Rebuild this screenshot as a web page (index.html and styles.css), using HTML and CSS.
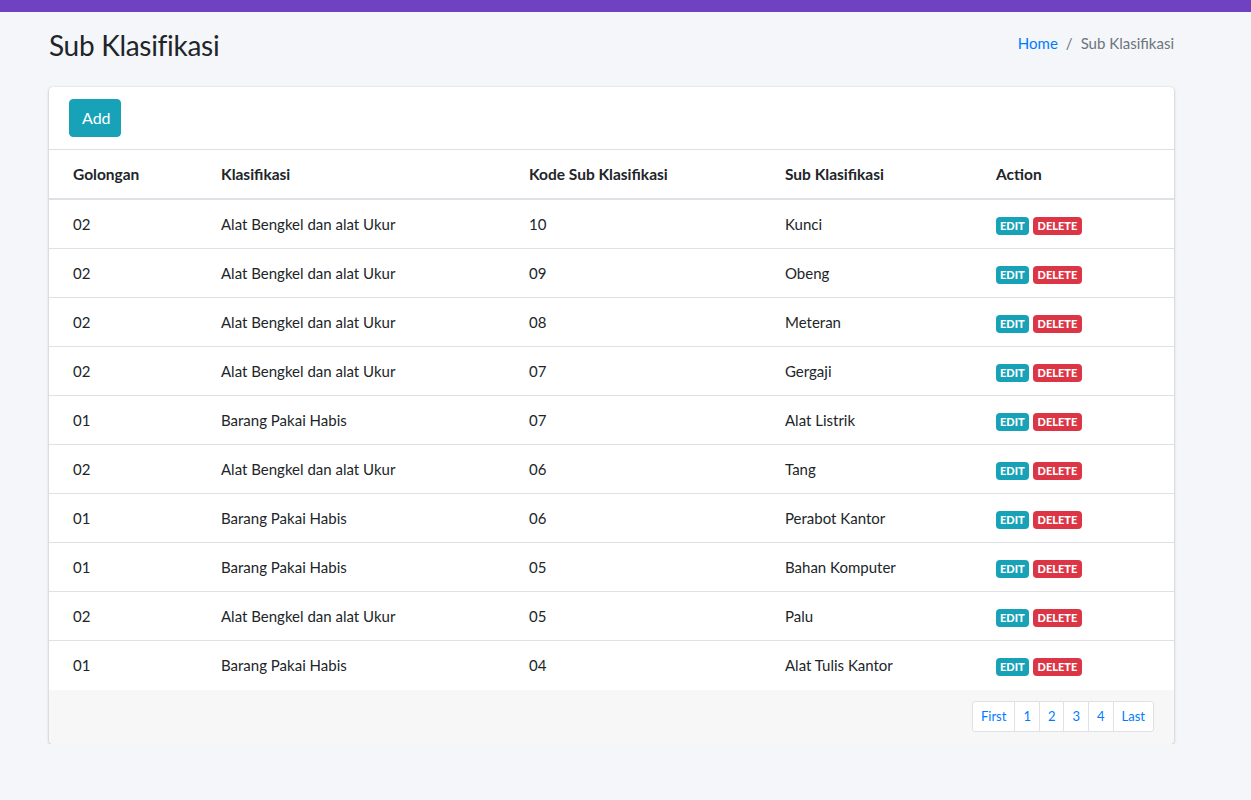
FILE: index.html
```html
<!DOCTYPE html>
<html>
<head>
<meta charset="utf-8">
<link rel="stylesheet" href="styles.css">
</head>
<body>
<div class="topbar"></div>
<div class="content-header">
  <h1 class="title">Sub Klasifikasi</h1>
  <ol class="breadcrumb">
    <li><a href="#">Home</a></li>
    <li class="sep">/</li>
    <li class="active">Sub Klasifikasi</li>
  </ol>
</div>
<div class="content">
  <div class="card">
    <div class="card-header">
      <button class="btn-add">Add</button>
    </div>
    <table class="table">
      <colgroup>
        <col class="c1"><col class="c2"><col class="c3"><col class="c4"><col class="c5">
      </colgroup>
      <thead>
        <tr><th>Golongan</th><th>Klasifikasi</th><th>Kode Sub Klasifikasi</th><th>Sub Klasifikasi</th><th>Action</th></tr>
      </thead>
      <tbody>
        <tr><td>02</td><td>Alat Bengkel dan alat Ukur</td><td>10</td><td>Kunci</td><td><span class="badge edit">Edit</span> <span class="badge del">Delete</span></td></tr>
        <tr><td>02</td><td>Alat Bengkel dan alat Ukur</td><td>09</td><td>Obeng</td><td><span class="badge edit">Edit</span> <span class="badge del">Delete</span></td></tr>
        <tr><td>02</td><td>Alat Bengkel dan alat Ukur</td><td>08</td><td>Meteran</td><td><span class="badge edit">Edit</span> <span class="badge del">Delete</span></td></tr>
        <tr><td>02</td><td>Alat Bengkel dan alat Ukur</td><td>07</td><td>Gergaji</td><td><span class="badge edit">Edit</span> <span class="badge del">Delete</span></td></tr>
        <tr><td>01</td><td>Barang Pakai Habis</td><td>07</td><td>Alat Listrik</td><td><span class="badge edit">Edit</span> <span class="badge del">Delete</span></td></tr>
        <tr><td>02</td><td>Alat Bengkel dan alat Ukur</td><td>06</td><td>Tang</td><td><span class="badge edit">Edit</span> <span class="badge del">Delete</span></td></tr>
        <tr><td>01</td><td>Barang Pakai Habis</td><td>06</td><td>Perabot Kantor</td><td><span class="badge edit">Edit</span> <span class="badge del">Delete</span></td></tr>
        <tr><td>01</td><td>Barang Pakai Habis</td><td>05</td><td>Bahan Komputer</td><td><span class="badge edit">Edit</span> <span class="badge del">Delete</span></td></tr>
        <tr><td>02</td><td>Alat Bengkel dan alat Ukur</td><td>05</td><td>Palu</td><td><span class="badge edit">Edit</span> <span class="badge del">Delete</span></td></tr>
        <tr><td>01</td><td>Barang Pakai Habis</td><td>04</td><td>Alat Tulis Kantor</td><td><span class="badge edit">Edit</span> <span class="badge del">Delete</span></td></tr>
      </tbody>
    </table>
    <div class="card-footer">
      <ul class="pagination">
        <li><a href="#">First</a></li>
        <li><a href="#">1</a></li>
        <li><a href="#">2</a></li>
        <li><a href="#">3</a></li>
        <li><a href="#">4</a></li>
        <li><a href="#">Last</a></li>
      </ul>
    </div>
  </div>
</div>
</body>
</html>
```
FILE: styles.css
```css
* { box-sizing: border-box; }
html, body { margin: 0; padding: 0; }
body {
  background: #f4f6f9;
  font-family: Lato, "Liberation Sans", sans-serif;
  font-size: 16px;
  line-height: 24px;
  color: #212529;
  width: 1251px;
}
.topbar { height: 12px; background: #6f42c1; }
.content-header {
  display: flex;
  justify-content: space-between;
  align-items: flex-start;
  padding: 16px 77px 0 49px;
  height: 75px;
}
.title {
  margin: 0;
  font-size: 28px;
  font-weight: 400;
  line-height: 34px;
  letter-spacing: -0.3px;
}
.breadcrumb {
  list-style: none;
  margin: 0;
  padding: 3px 0 0;
  display: flex;
  gap: 8px;
  font-size: 15px;
}
.breadcrumb a { color: #007bff; text-decoration: none; }
.breadcrumb .sep, .breadcrumb .active { color: #6c757d; }
.content { padding: 0 77px 0 49px; }
.card {
  background: #fff;
  border-radius: 4px;
  box-shadow: 0 0 1px rgba(0,0,0,.15), 0 1px 3px rgba(0,0,0,.25);
  overflow: hidden;
}
.card-header {
  padding: 12px 20px;
  border-bottom: 1px solid rgba(0,0,0,.125);
}
.btn-add {
  display: block;
  background: #17a2b8;
  border: 1px solid #17a2b8;
  color: #fff;
  font-family: inherit;
  font-size: 16px;
  line-height: 24px;
  padding: 6px 12px;
  border-radius: 4px;
  width: 52px;
  height: 38px;
}
.table {
  width: 100%;
  border-collapse: collapse;
  table-layout: fixed;
}
.c1 { width: 160px; }
.c2 { width: 308px; }
.c3 { width: 256px; }
.c4 { width: 211px; }
.c5 { width: 190px; }
.table th, .table td {
  text-align: left;
  padding: 12px;
  height: 49px;
  vertical-align: middle;
  font-size: 15px;
  white-space: nowrap;
}
.table th { font-weight: 700; height: 48px; border-bottom: 2px solid #dee2e6; font-size: 15.5px; }
.table td { border-top: 1px solid #dee2e6; }
.table th:first-child, .table td:first-child { padding-left: 24px; }
.table tbody tr:first-child td { border-top: none; }
.badge {
  display: inline-block;
  font-size: 11px;
  font-weight: 900;
  line-height: 12px;
  padding: 3px 5px;
  border-radius: 4px;
  color: #fff;
  text-transform: uppercase;
  letter-spacing: 0;
  vertical-align: middle;
}
.badge.edit { background: #17a2b8; padding: 3px 4px; }
.badge.del { background: #dc3545; }
.card-footer {
  background: #f7f7f7;
  padding: 11px 20px 12px;
  display: flex;
  justify-content: flex-end;
}
.pagination {
  list-style: none;
  margin: 0;
  padding: 0;
  display: flex;
}
.pagination li a {
  display: block;
  padding: 4px 8px;
  font-size: 13px;
  line-height: 21px;
  color: #007bff;
  text-decoration: none;
  background: #fff;
  border: 1px solid #dee2e6;
  margin-left: -1px;
}
.pagination li:first-child a { margin-left: 0; border-radius: 3px 0 0 3px; }
.pagination li:last-child a { border-radius: 0 3px 3px 0; }
```
